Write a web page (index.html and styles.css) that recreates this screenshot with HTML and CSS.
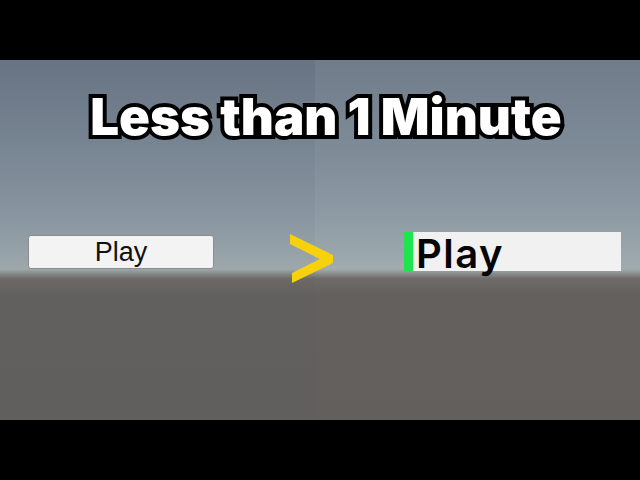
FILE: index.html
```html
<!DOCTYPE html>
<html lang="en">
<head>
    <meta charset="UTF-8">
    <meta name="viewport" content="width=device-width, initial-scale=1.0">
    <title>Less than 1 Minute</title>
    <link rel="stylesheet" href="styles.css">
</head>
<body>
    <div class="bar"></div>
    <div class="scene">
        <h1 class="title">Less than 1 Minute</h1>
        <div class="compare">
            <div class="old-btn">Play</div>
            <svg class="arrow" width="44" height="50" viewBox="0 0 44 50">
                <polygon points="0,0 43,21 43,29 2,49 2,39 30,25 0,10" fill="#f7d20c"/>
            </svg>
            <div class="new-btn">
                <span class="accent"></span>
                <span class="label">Play</span>
            </div>
        </div>
    </div>
    <div class="bar"></div>
</body>
</html>
```

FILE: styles.css
```css
*{
    margin: 0;
    padding: 0;
    box-sizing: border-box;
}
body {
    background: #000;
    width: 640px;
    height: 480px;
    overflow: hidden;
}
.bar {
    height: 60px;
    background: #000;
}
.scene {
    height: 360px;
    /* right half of the split view is lit a touch brighter */
    background:
        linear-gradient(180deg, #707c8a 0px, #7c8996 80px, #8f9ca5 160px, #9da9ad 202px, #a2acae 209px, #6d6a67 219px, #63605e 235px, #625f5d 360px) 315px 0 / 325px 100% no-repeat,
        linear-gradient(180deg, #687483 0px, #768391 80px, #8a97a1 160px, #99a5aa 202px, #9ea8aa 209px, #6b6865 219px, #62605e 235px, #615f5d 360px);
    display: flex;
    flex-direction: column;
}
.title {
    font-family: Inter, "Noto Sans", sans-serif;
    font-weight: 900;
    font-size: 51px;
    line-height: 1;
    color: #fff;
    text-align: center;
    padding: 31px 0 0 12px;
    -webkit-text-stroke: 8px #000;
    paint-order: stroke fill;
}
.compare {
    display: grid;
    grid-template-columns: 186px 44px 217px;
    align-items: start;
    margin-top: 89px;
    padding-left: 28px;
}
.old-btn {
    height: 34px;
    margin-top: 4px;
    background: #f3f3f3;
    border: 1px solid #8a8c8e;
    border-radius: 3px;
    font-family: "Liberation Sans", Arial, sans-serif;
    font-size: 27px;
    line-height: 32px;
    color: #111;
    text-align: center;
}
.arrow {
    display: block;
    margin: 3px 0 0 76px;
}
.new-btn {
    grid-column: 3;
    margin: 1px 0 0 146px;
    width: 217px;
    height: 39px;
    display: flex;
    background: #f1f1f1;
}
.accent {
    width: 9px;
    background: #1ee44e;
}
.label {
    font-family: Inter, "DejaVu Sans", sans-serif;
    font-weight: 600;
    font-size: 40px;
    line-height: 39px;
    letter-spacing: 1.5px;
    color: #050505;
    padding: 2px 0 0 3px;
}
```
